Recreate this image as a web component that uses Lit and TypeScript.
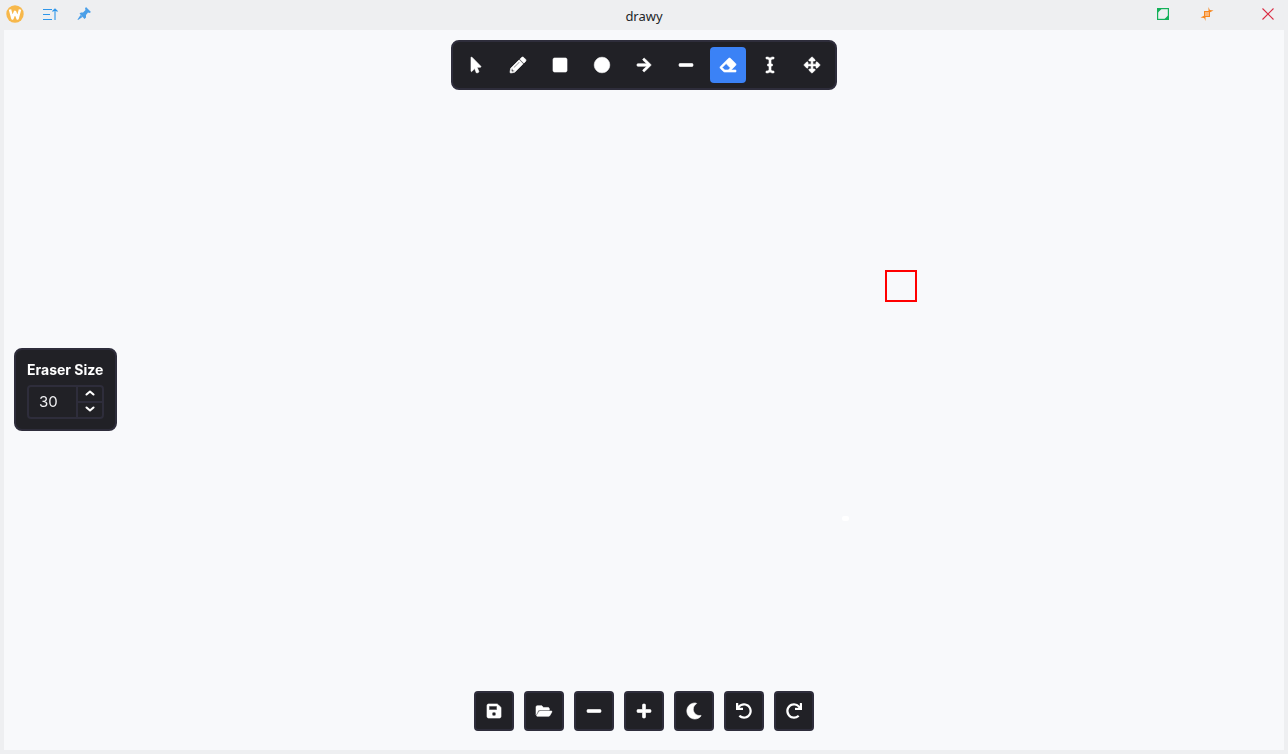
import { LitElement, html, css } from "lit";
import { customElement } from "lit/decorators.js";

const fa = (vw: number, d: string) => html`<svg class="fa" viewBox="0 0 ${vw} 512"><path fill="currentColor" stroke="currentColor" stroke-width="20" stroke-linejoin="round" d="${d}"></path></svg>`;

const tools: [number, string][] = [
  [320, "M302.189 329.126H196.105l55.831 135.993c3.889 9.428-.555 19.999-9.444 23.999l-49.165 21.427c-9.165 4-19.443-.571-23.332-9.714l-53.053-129.136-86.664 89.138C18.729 472.71 0 463.554 0 447.977V18.299C0 1.899 19.921-6.096 30.277 5.443l284.412 292.542c11.472 11.179 3.007 31.141-12.5 31.141z"],
  [512, "M497.9 142.1l-46.1 46.1c-4.7 4.7-12.3 4.7-17 0l-111-111c-4.7-4.7-4.7-12.3 0-17l46.1-46.1c18.7-18.7 49.1-18.7 67.9 0l60.1 60.1c18.8 18.7 18.8 49.1 0 67.9zM284.2 99.8L21.6 362.4.4 483.9c-2.9 16.4 11.4 30.6 27.8 27.8l121.5-21.3 262.6-262.6c4.7-4.7 4.7-12.3 0-17l-111-111c-4.8-4.7-12.4-4.7-17.1 0zM124.1 339.9c-5.5-5.5-5.5-14.3 0-19.8l154-154c5.5-5.5 14.3-5.5 19.8 0s5.5 14.3 0 19.8l-154 154c-5.5 5.5-14.3 5.5-19.8 0zM88 424h48v36.3l-64.5 11.3-31.1-31.1L51.7 376H88v48z"],
  [448, "M400 32H48C21.5 32 0 53.5 0 80v352c0 26.5 21.5 48 48 48h352c26.5 0 48-21.5 48-48V80c0-26.5-21.5-48-48-48z"],
  [512, "M256 8C119 8 8 119 8 256s111 248 248 248 248-111 248-248S393 8 256 8z"],
  [448, "M190.5 66.9l22.2-22.2c9.4-9.4 24.6-9.4 33.9 0L441 239c9.4 9.4 9.4 24.6 0 33.9L246.6 467.3c-9.4 9.4-24.6 9.4-33.9 0l-22.2-22.2c-9.5-9.5-9.3-25 .4-34.3L311.4 296H24c-13.3 0-24-10.7-24-24v-32c0-13.3 10.7-24 24-24h287.4L190.9 101.2c-9.8-9.3-10-24.8-.4-34.3z"],
  [448, "M416 208H32c-17.67 0-32 14.33-32 32v32c0 17.67 14.33 32 32 32h384c17.67 0 32-14.33 32-32v-32c0-17.67-14.33-32-32-32z"],
  [512, "M497.941 273.941c18.745-18.745 18.745-49.137 0-67.882l-160-160c-18.745-18.745-49.136-18.746-67.883 0l-256 256c-18.745 18.745-18.745 49.137 0 67.882l96 96A48.004 48.004 0 0 0 144 480h356c6.627 0 12-5.373 12-12v-40c0-6.627-5.373-12-12-12H355.883l142.058-142.059zm-302.627-62.627l137.373 137.373L265.373 416H150.628l-80-80 124.686-124.686z"],
  [256, "M256 52.048V12.065C256 5.496 250.726.148 244.158.066 211.621-.344 166.469.011 128 37.959 90.266.736 46.979-.114 11.913.114 5.318.157 0 5.519 0 12.114v39.645c0 6.687 5.458 12.078 12.145 11.998C38.111 63.447 96 67.243 96 112.182V224H60c-6.627 0-12 5.373-12 12v40c0 6.627 5.373 12 12 12h36v112c0 44.932-56.075 48.031-83.95 47.959C5.404 447.942 0 453.306 0 459.952v39.983c0 6.569 5.274 11.917 11.842 11.999 32.537.409 77.689.054 116.158-37.894 37.734 37.223 81.021 38.073 116.087 37.845 6.595-.043 11.913-5.405 11.913-12V460.24c0-6.687-5.458-12.078-12.145-11.998C217.889 448.553 160 444.939 160 400V288h36c6.627 0 12-5.373 12-12v-40c0-6.627-5.373-12-12-12h-36V112.182c0-44.932 56.075-48.213 83.95-48.142 6.646.018 12.05-5.346 12.05-11.992z"],
  [512, "M352.201 425.775l-79.196 79.196c-9.373 9.373-24.568 9.373-33.941 0l-79.196-79.196c-15.119-15.119-4.411-40.971 16.971-40.97h51.162L228 284H127.196v51.162c0 21.382-25.851 32.09-40.971 16.971L7.029 272.937c-9.373-9.373-9.373-24.569 0-33.941L86.225 159.8c15.119-15.119 40.971-4.411 40.971 16.971V228H228V127.196h-51.23c-21.382 0-32.09-25.851-16.971-40.971l79.196-79.196c9.373-9.373 24.568-9.373 33.941 0l79.196 79.196c15.119 15.119 4.411 40.971-16.971 40.971h-51.162V228h100.804v-51.162c0-21.382 25.851-32.09 40.97-16.971l79.196 79.196c9.373 9.373 9.373 24.569 0 33.941L425.773 352.2c-15.119 15.119-40.971 4.411-40.97-16.971V284H284v100.804h51.23c21.382 0 32.09 25.851 16.971 40.971z"],
];

const actions: [number, string][] = [
  [448, "M433.941 129.941l-83.882-83.882A48 48 0 0 0 316.118 32H48C21.49 32 0 53.49 0 80v352c0 26.51 21.49 48 48 48h352c26.51 0 48-21.49 48-48V163.882a48 48 0 0 0-14.059-33.941zM224 416c-35.346 0-64-28.654-64-64 0-35.346 28.654-64 64-64s64 28.654 64 64c0 35.346-28.654 64-64 64zm96-304.52V212c0 6.627-5.373 12-12 12H76c-6.627 0-12-5.373-12-12V108c0-6.627 5.373-12 12-12h228.52c3.183 0 6.235 1.264 8.485 3.515l3.48 3.48A11.996 11.996 0 0 1 320 111.48z"],
  [576, "M572.694 292.093L500.27 416.248A63.997 63.997 0 0 1 444.989 448H45.025c-18.523 0-30.064-20.093-20.731-36.093l72.424-124.155A64 64 0 0 1 152 256h399.964c18.523 0 30.064 20.093 20.73 36.093zM152 224h328v-48c0-26.51-21.49-48-48-48H272l-64-64H48C21.49 64 0 85.49 0 112v278.046l69.077-118.418C86.214 242.25 117.989 224 152 224z"],
  [448, "M416 208H32c-17.67 0-32 14.33-32 32v32c0 17.67 14.33 32 32 32h384c17.67 0 32-14.33 32-32v-32c0-17.67-14.33-32-32-32z"],
  [448, "M416 208H272V64c0-17.67-14.33-32-32-32h-32c-17.67 0-32 14.33-32 32v144H32c-17.67 0-32 14.33-32 32v32c0 17.67 14.33 32 32 32h144v144c0 17.67 14.33 32 32 32h32c17.67 0 32-14.33 32-32V304h144c17.67 0 32-14.33 32-32v-32c0-17.67-14.33-32-32-32z"],
  [512, "M283.211 512c78.962 0 151.079-35.925 198.857-94.792 7.068-8.708-.639-21.43-11.562-19.35-124.203 23.654-238.262-71.576-238.262-196.954 0-72.222 38.662-138.635 101.498-174.394 9.686-5.512 7.25-20.197-3.756-22.23A258.156 258.156 0 0 0 283.211 0c-141.309 0-256 114.511-256 256 0 141.309 114.511 256 256 256z"],
  [512, "M212.333 224.333H12c-6.627 0-12-5.373-12-12V12C0 5.373 5.373 0 12 0h48c6.627 0 12 5.373 12 12v78.112C117.773 39.279 184.26 7.47 258.175 8.007c136.906.994 246.448 111.623 246.157 248.532C504.041 393.258 393.12 504 256.333 504c-64.089 0-122.496-24.313-166.51-64.215-5.099-4.622-5.334-12.554-.467-17.42l33.967-33.967c4.474-4.474 11.662-4.717 16.401-.525C170.76 415.336 211.58 432 256.333 432c97.268 0 176-78.716 176-176 0-97.267-78.716-176-176-176-58.496 0-110.28 28.476-142.274 72.333h98.274c6.627 0 12 5.373 12 12v48c0 6.627-5.373 12-12 12z"],
  [512, "M500.33 0h-47.41a12 12 0 0 0-12 12.57l4 82.76A247.42 247.42 0 0 0 256 8C119.34 8 7.9 119.53 8 256.19 8.1 393.07 119.1 504 256 504a247.1 247.1 0 0 0 166.18-63.91 12 12 0 0 0 .48-17.43l-34-34a12 12 0 0 0-16.38-.55A176 176 0 1 1 402.1 157.8l-101.53-4.87a12 12 0 0 0-12.57 12v47.41a12 12 0 0 0 12 12h200.33a12 12 0 0 0 12-12V12a12 12 0 0 0-12-12z"],
];

@customElement("app-root")
export class AppRoot extends LitElement {
  static styles = css`
    :host { display: block; width: 1288px; height: 754px; overflow: hidden; background: #eeeff1; }
    .window { display: flex; flex-direction: column; height: 754px; box-sizing: border-box; padding: 0 4px 4px; }
    .titlebar { height: 30px; flex: none; margin: 0 -4px; display: grid; grid-template-columns: 1fr auto 1fr; align-items: center; }
    .left, .right { display: flex; align-items: center; height: 30px; box-sizing: border-box; }
    .left { padding: 0 0 3px 6px; gap: 19px; }
    .right { justify-content: flex-end; padding: 0 14px 2px 0; }
    .right svg:nth-child(1) { margin-right: 31px; }
    .right svg:nth-child(2) { margin-right: 48px; }
    .title { font: 13px "Noto Sans", sans-serif; color: #232629; margin-top: 1px; }
    .canvas { flex: 1; position: relative; background: #f8f9fb; }
    .toolbar { position: absolute; top: 10px; left: 447px; display: flex; gap: 6px; padding: 5px; border: 2px solid #2e2d3b; border-radius: 8px; background: #212126; }
    .tool { width: 36px; height: 36px; border-radius: 4px; display: flex; align-items: center; justify-content: center; color: #fff; }
    .tool.active { background: #3b82f6; }
    .fa { width: 16px; height: 16px; display: block; overflow: visible; }
    .thin path { stroke-width: 0; }
    .panel { position: absolute; left: 10px; top: 318px; width: 103px; height: 83px; box-sizing: border-box; background: #212126; border: 2px solid #2e2d3b; border-radius: 8px; padding: 11px 11px 0; color: #fff; font-family: Inter, sans-serif; will-change: transform; }
    .label { font-size: 14px; font-weight: 700; line-height: 17px; white-space: nowrap; }
    .spin { margin-top: 7px; width: 77px; height: 34px; box-sizing: border-box; border: 2px solid #2e2d3b; border-radius: 4px; display: flex; }
    .value { flex: 1; padding-left: 10px; font-size: 15px; line-height: 30px; color: #f1f1f3; }
    .steppers { width: 26px; box-sizing: border-box; border-left: 2px solid #2e2d3b; display: flex; flex-direction: column; }
    .step { flex: 1; display: flex; align-items: center; justify-content: center; padding-bottom: 2px; }
    .step + .step { border-top: 2px solid #2e2d3b; }
    .step svg { width: 10px; height: 6px; display: block; }
    .actions { position: absolute; left: 470px; top: 661px; display: flex; gap: 10px; }
    .action { width: 40px; height: 40px; box-sizing: border-box; border: 2px solid #2e2d3b; border-radius: 4px; background: #212126; color: #fff; display: flex; align-items: center; justify-content: center; }
    .square { position: absolute; left: 881px; top: 240px; width: 32px; height: 32px; box-sizing: border-box; border: 2px solid #f00; }
    .blob { position: absolute; left: 838px; top: 486px; width: 7px; height: 5px; border-radius: 2px; background: #fff; }
  `;

  render() {
    return html`<div class="window">
      <div class="titlebar">
        <div class="left">
          <svg width="18" height="18" viewBox="0 0 18 18">
            <circle cx="9" cy="9" r="8.7" fill="#f7b84b"></circle>
            <path d="M4 4.5 6.4 13.5 9 6.8 11.6 13.5 14 4.5" fill="none" stroke="#fff" stroke-width="2.5" stroke-linejoin="round"></path>
          </svg>
          <svg width="15" height="12" viewBox="0 0 15 12" fill="none" stroke="#2f96ea" stroke-width="1.1">
            <path d="M0 1.5H9M0 6.5H7M0 11.5H9M12 12V1M9.5 3.5 12 1 14.5 3.5"></path>
          </svg>
          <svg width="14" height="13" viewBox="0 0 14 13">
            <path d="M9 0 14 5 12.5 6 11 5.5 9 8 9 10.5 7.5 12 2.5 6.5 4 5.5 6 5.5 8.5 3 8 1.5ZM3.5 8 5.5 10 1 13 .5 12.5Z" fill="#4b9fe8"></path>
          </svg>
        </div>
        <div class="title">drawy</div>
        <div class="right">
          <svg width="12" height="12" viewBox="0 0 12 12">
            <rect x=".6" y=".6" width="10.8" height="10.8" fill="#eeeff1" stroke="#13b159" stroke-width="1.2"></rect>
            <path d="M1 1H4.5L1 4.5ZM11 11H7.5L11 7.5Z" fill="#13b159"></path>
          </svg>
          <svg width="14" height="14" viewBox="0 0 14 14">
            <path d="M8.5 0 9.8 3 13.5 3.5 9.5 5.5H8.5ZM5.5 14 4.2 11 .5 10.5 4.5 8.5H5.5Z" fill="#f6871f"></path>
            <rect x="4.5" y="4.5" width="5" height="5" fill="#fbb77a" stroke="#f6871f"></rect>
          </svg>
          <svg width="12" height="12" viewBox="0 0 12 12">
            <path d="M.5.5 11.5 11.5M11.5.5.5 11.5" stroke="#da2c43" stroke-width="1.1" fill="none"></path>
          </svg>
        </div>
      </div>
      <div class="canvas">
        <div class="toolbar">
          ${tools.map(([w, d], i) => html`<div class="tool ${i === 6 ? "active" : ""}">${fa(w, d)}</div>`)}
        </div>
        <div class="panel">
          <div class="label">Eraser Size</div>
          <div class="spin">
            <div class="value">30</div>
            <div class="steppers">
              <div class="step"><svg viewBox="0 0 10 6"><path d="M1.5 4.5 5 1.5 8.5 4.5" fill="none" stroke="#fff" stroke-width="2.1" stroke-linecap="round" stroke-linejoin="round"></path></svg></div>
              <div class="step"><svg viewBox="0 0 10 6"><path d="M1.5 1.5 5 4.5 8.5 1.5" fill="none" stroke="#fff" stroke-width="2.1" stroke-linecap="round" stroke-linejoin="round"></path></svg></div>
            </div>
          </div>
        </div>
        <div class="square"></div>
        <div class="blob"></div>
        <div class="actions">
          ${actions.map(([w, d], i) => html`<div class="action ${i >= 5 ? "thin" : ""}">${fa(w, d)}</div>`)}
        </div>
      </div>
    </div>`;
  }
}
